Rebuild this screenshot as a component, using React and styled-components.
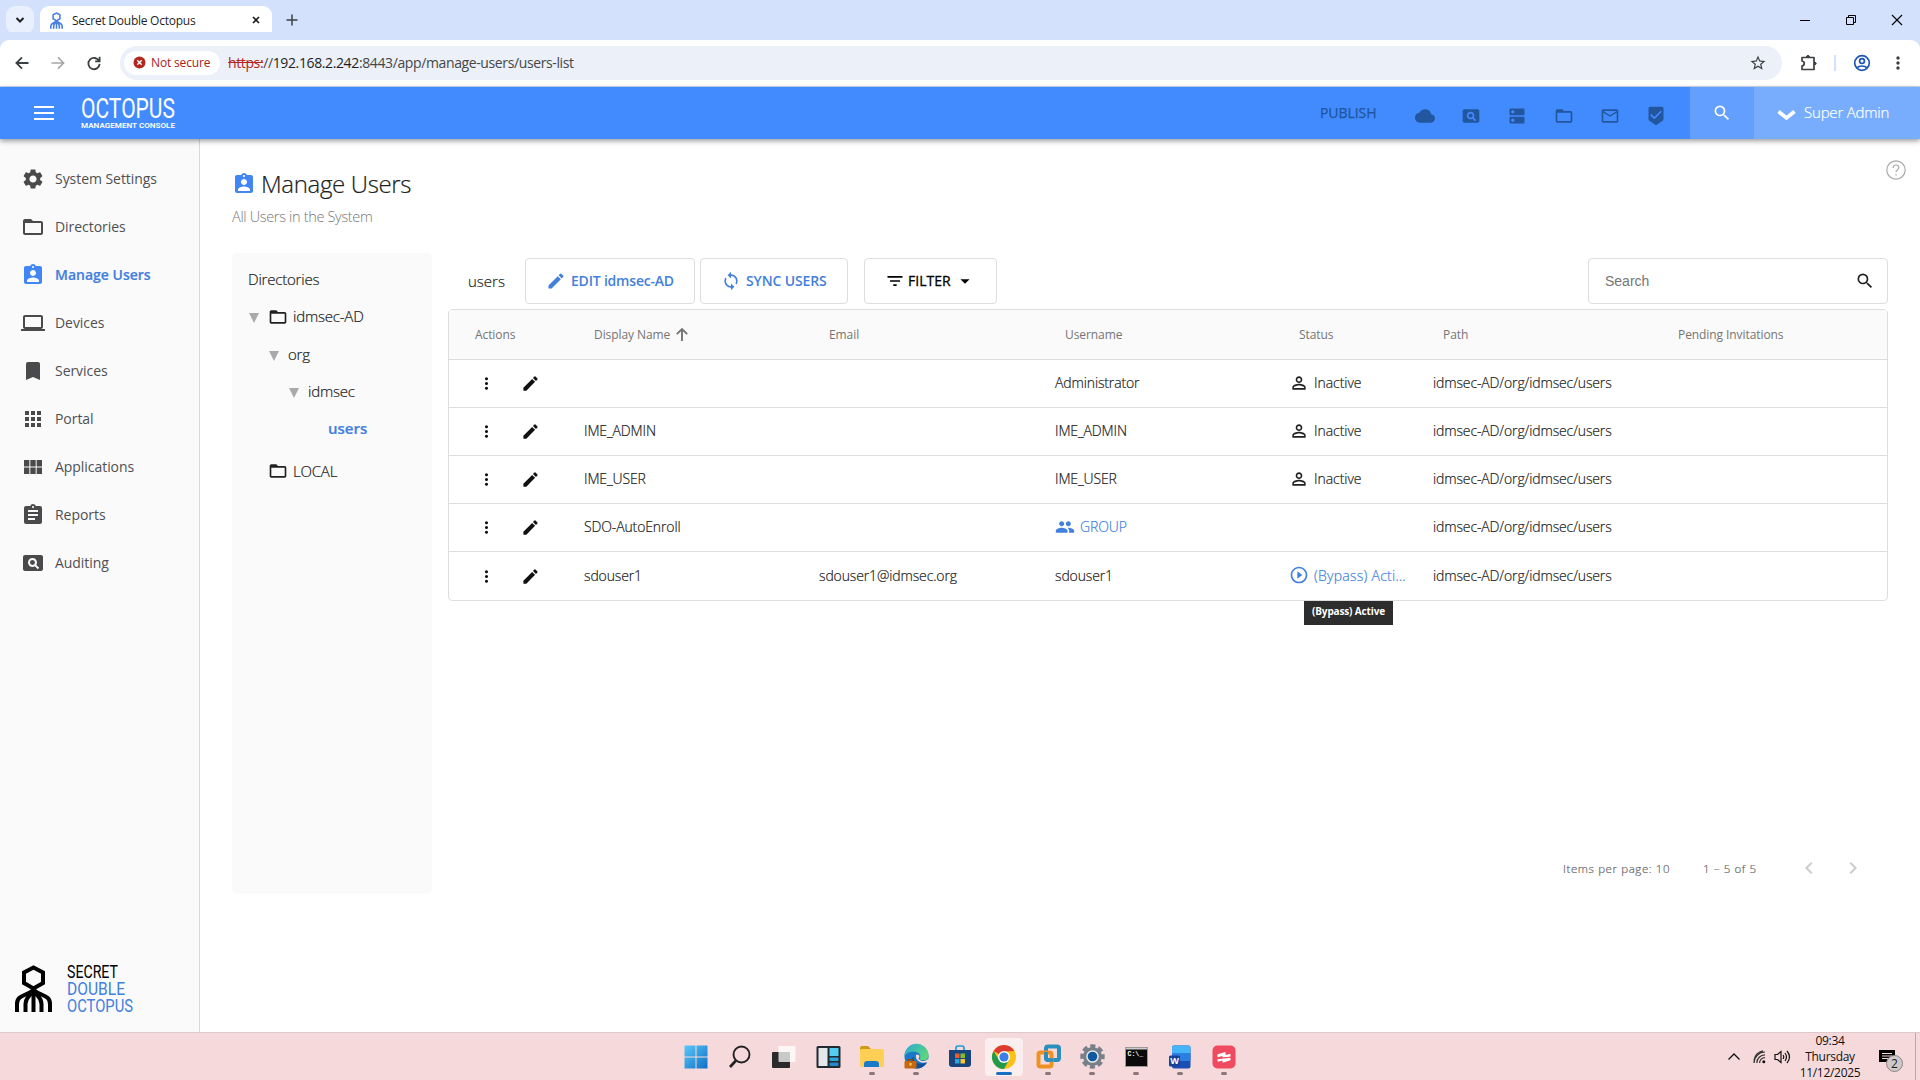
import React, { useState } from 'react';
import styled, { createGlobalStyle, css } from 'styled-components';
import {
  MdSettings, MdFolderOpen, MdAssignmentInd, MdLaptop, MdBookmark, MdApps, MdViewModule,
  MdAssignment, MdPageview, MdCloud, MdDns, MdMailOutline, MdBeenhere, MdSearch, MdEdit,
  MdSync, MdFilterList, MdArrowDropDown, MdMoreVert, MdPersonOutline, MdPeople,
  MdPlayCircleOutline, MdChevronLeft, MdChevronRight, MdStarOutline,
} from 'react-icons/md';

const GlobalStyle = createGlobalStyle`
  * { box-sizing: border-box; }
  body {
    margin: 0;
    overflow: hidden;
    background: #fff;
    font-family: 'Open Sans', 'Noto Sans', sans-serif;
    color: #212121;
  }
  svg { display: block; flex: none; overflow: visible; }
  button, input { font-family: inherit; }
`;

const lightText = css`
  font-weight: 300;
  -webkit-text-stroke: 0.2px currentColor;
`;

const Screen = styled.div`
  width: 1920px;
  height: 1080px;
  display: flex;
  flex-direction: column;
`;

/* ---------- browser ---------- */

const TabStrip = styled.div`
  height: 40px;
  background: #d3e1fc;
  display: flex;
  align-items: flex-start;
  padding: 6px 0 0 6px;
`;

const TabSearch = styled.div`
  width: 28px;
  height: 28px;
  border-radius: 9px;
  background: #e9effd;
  display: flex;
  align-items: center;
  justify-content: center;
`;

const Tab = styled.div`
  width: 232px;
  height: 34px;
  margin-left: 6px;
  padding: 0 10px 6px 9px;
  background: #fff;
  border-radius: 9px 9px 0 0;
  display: flex;
  align-items: center;
  font-size: 12px;
  letter-spacing: -0.25px;
  color: #1f1f1f;
`;

const TabTitle = styled.span`
  margin-left: 8px;
  flex: 1;
`;

const NewTab = styled.div`
  width: 40px;
  height: 28px;
  display: flex;
  align-items: center;
  justify-content: center;
`;

const WindowControls = styled.div`
  margin-left: auto;
  height: 28px;
  display: grid;
  grid-template-columns: repeat(3, 46px);
  align-items: center;
  justify-items: center;
`;

const AddressRow = styled.div`
  height: 47px;
  background: #fff;
  border-bottom: 1px solid #c9d9ee;
  box-shadow: 0 -8px 0 #d3e1fc;
  border-radius: 9px 9px 0 0;
  display: flex;
  align-items: center;
`;

const NavButtons = styled.div`
  width: 120px;
  padding-left: 13px;
  display: grid;
  grid-template-columns: 20px 20px 20px;
  column-gap: 16px;
`;

const AddressBar = styled.div`
  width: 1662px;
  height: 34px;
  border-radius: 17px;
  background: #ebf0f9;
  display: flex;
  align-items: center;
  padding: 0 15px 0 4px;
  margin-bottom: 1px;
`;

const SecureChip = styled.div`
  width: 96px;
  height: 24px;
  border-radius: 12px;
  background: #fff;
  color: #a8201a;
  display: flex;
  align-items: center;
  gap: 5px;
  padding-left: 9px;
  font-size: 12px;
  font-weight: 500;
  letter-spacing: -0.15px;
  white-space: nowrap;
`;

const Url = styled.div`
  margin-left: 8px;
  flex: 1;
  font-size: 14px;
  letter-spacing: -0.38px;
  color: #474747;

  s { color: #b3261e; }
  b { font-weight: 400; color: #1f1f1f; }
`;

const BrowserActions = styled.div`
  flex: 1;
  display: flex;
  align-items: center;
  padding-left: 18px;
  color: #3c4043;
`;

const Divider = styled.span`
  width: 2px;
  height: 16px;
  margin: 0 17px 0 16px;
  background: #d3e1fc;
`;

const BrowserMenu = styled(MdMoreVert)`
  margin-left: 17px;
`;

/* ---------- app header ---------- */

const Header = styled.header`
  height: 52px;
  background: #428bfe;
  display: flex;
  align-items: center;
  position: relative;
  z-index: 2;
  box-shadow: 0 2px 5px rgba(0, 0, 0, 0.4);
  padding-left: 32px;
  color: #fff;
`;

const Brand = styled.div`
  margin-left: 24px;
`;

const Publish = styled.span`
  margin-left: auto;
  padding-bottom: 1px;
  font-size: 14px;
  color: #1f559f;
  -webkit-text-stroke: 0.25px currentColor;
  letter-spacing: -0.05px;
  width: 82px;
`;

const HeaderIcons = styled.div`
  display: grid;
  grid-template-columns: repeat(6, 46.2px);
  justify-items: center;
  padding: 6px 11px 0 0;
  color: #22579f;
`;

const HeaderSearch = styled.div`
  width: 64px;
  height: 52px;
  background: #629fff;
  display: flex;
  align-items: center;
  justify-content: center;
`;

const Account = styled.div`
  width: 166px;
  height: 52px;
  padding: 0 0 2px 23px;
  background: #78adfe;
  display: flex;
  align-items: center;
  gap: 8px;
  font-size: 15px;
  ${lightText}
  letter-spacing: -0.2px;

  svg { margin-top: 5px; }
`;

/* ---------- app body ---------- */

const Body = styled.div`
  flex: 1;
  display: flex;
  min-height: 0;
`;

const Sidebar = styled.nav`
  width: 200px;
  background: #fafafa;
  border-right: 1px solid #d9d9d9;
  padding-top: 16px;
  display: flex;
  flex-direction: column;
`;

const NavItem = styled.a`
  height: 48px;
  padding-left: 21px;
  display: flex;
  align-items: center;
  gap: 10px;
  font-size: 14px;
  letter-spacing: -0.05px;
  color: #4f5054;

  svg { color: #4a4a4d; }

  ${(p) => p.$active && css`
    font-weight: 600;
    color: #427fdf;
    -webkit-text-stroke: 0.2px currentColor;
    letter-spacing: 0;

    svg { color: #4285f4; }
  `}
`;

const NavLabel = styled.span`
  padding-bottom: 2px;
`;

const SideLogo = styled.div`
  margin-top: auto;
  padding: 0 0 18px 14px;
`;

const Main = styled.main`
  flex: 1;
  display: flex;
  flex-direction: column;
  padding: 29px 32px 0 32px;
  position: relative;
`;

const Title = styled.h1`
  margin: 0;
  height: 30px;
  display: flex;
  align-items: center;
  gap: 5px;
  font-size: 24px;
  ${lightText}
  letter-spacing: -0.35px;
  color: #212121;

  svg { color: #4285f4; margin-top: 1px; }
`;

const Subtitle = styled.p`
  margin: 8px 0 0;
  height: 22px;
  line-height: 22px;
  font-size: 14.5px;
  font-weight: 300;
  letter-spacing: -0.33px;
  color: #757575;
`;

const Help = styled.div`
  position: absolute;
  top: 21px;
  right: 14px;
`;

const Columns = styled.div`
  margin-top: 25px;
  display: flex;
  gap: 16px;
`;

const TreePanel = styled.aside`
  width: 200px;
  height: 641px;
  border-radius: 5px;
  background: #fafafa;
  padding: 13px 16px;
  font-size: 15px;
  ${lightText}
  letter-spacing: -0.2px;
  color: #212121;
`;

const TreeHeading = styled.div`
  height: 26px;
  line-height: 26px;
`;

const TreeNode = styled.div`
  display: flex;
  align-items: center;
  height: ${(p) => p.$height}px;
  padding-left: ${(p) => p.$indent}px;

  ${(p) => p.$selected && css`
    font-weight: 600;
    letter-spacing: 0;
    color: #427fdf;
  `}
`;

const Triangle = styled.i`
  width: 0;
  height: 0;
  margin: 4px 9px 0 0;
  border: 5px solid transparent;
  border-top: 10px solid #aaa;
  border-bottom: 0;
`;

const FolderIcon = styled(MdFolderOpen)`
  margin: 1px 5px 0 0;
`;

const Content = styled.section`
  width: 1440px;
`;

const Toolbar = styled.div`
  height: 56px;
  padding: 5px 0;
  display: flex;
`;

const GroupName = styled.div`
  width: 77px;
  padding-left: 20px;
  line-height: 46px;
  font-size: 15px;
  ${lightText}
`;

const Button = styled.button`
  width: ${(p) => p.$width}px;
  height: 46px;
  margin-right: ${(p) => p.$after || 0}px;
  padding: 0 0 0 20px;
  border: 1px solid #ddd;
  border-radius: 4px;
  background: #fff;
  color: ${(p) => (p.$dark ? '#000' : '#437fdc')};
  display: flex;
  align-items: center;
  gap: ${(p) => p.$gap}px;
  font-size: 14px;
  font-weight: ${(p) => (p.$dark ? 500 : 600)};
  letter-spacing: ${(p) => p.$track}px;
`;

const ButtonText = styled.span`
  padding-bottom: 2px;
`;

const FilterText = styled(ButtonText)`
  -webkit-text-stroke: 0.3px currentColor;
`;

const SearchBox = styled.label`
  width: 300px;
  height: 46px;
  margin-left: auto;
  padding: 0 12px 0 16px;
  border: 1px solid #ddd;
  border-radius: 4px;
  display: flex;
  align-items: center;
`;

const SearchInput = styled.input`
  flex: 1;
  min-width: 0;
  padding: 0;
  border: 0;
  outline: 0;
  background: none;
  font: 14px 'Liberation Sans', Arial, sans-serif;

  &::placeholder { color: #757575; }
`;

const Table = styled.div`
  border: 1px solid #ddd;
  border-radius: 4px;
`;

const Row = styled.div`
  display: grid;
  grid-template-columns: 135px 235px 236px 236px 142px 235px 1fr;
  align-items: center;
  height: 48px;
  border-top: 1px solid #ddd;
  font-size: 14px;
  ${lightText}
  letter-spacing: -0.13px;

  &:last-child { height: 49px; }
`;

const HeadRow = styled(Row)`
  height: 49px;
  border-top: 0;
  background: #fafafa;
  font-size: 12px;
  font-weight: 400;
  -webkit-text-stroke: 0;
  letter-spacing: -0.08px;
  color: #757575;
`;

const HeadCell = styled.div`
  display: flex;
  align-items: center;
  gap: 6px;
  padding-left: ${(p) => p.$pad || 10}px;
`;

const Cell = styled.div`
  display: flex;
  align-items: center;
  min-width: 0;
  padding-bottom: 2px;
  color: ${(p) => (p.$link ? '#427fdf' : 'inherit')};
`;

const ActionCell = styled(Cell)`
  padding: 0 0 0 28px;
  gap: 25px;
  color: #111;
`;

const GroupIcon = styled(MdPeople)`
  margin-right: 5px;
`;

const StatusCell = styled(Cell)`
  position: relative;
  gap: 5px;
  margin-left: -2px;
`;

const StatusText = styled.span`
  width: 94px;
  white-space: nowrap;
  letter-spacing: ${(p) => p.$track || 0}px;
`;

const Tooltip = styled.div`
  position: absolute;
  top: 36px;
  left: 15px;
  width: 89px;
  height: 24px;
  line-height: 20px;
  text-align: center;
  background: #2d2d2d;
  color: #fff;
  font-size: 10px;
  font-weight: 700;
  -webkit-text-stroke: 0;
  letter-spacing: -0.15px;
  z-index: 3;
`;

const Pagination = styled.div`
  height: 40px;
  margin-top: 247px;
  display: flex;
  align-items: center;
  justify-content: flex-end;
  padding-right: 23px;
  font-size: 11.5px;
  ${lightText}
  letter-spacing: 0.6px;
  color: #666;
`;

const PageSize = styled.span`
  width: 140px;
`;

const PageRange = styled.span`
  width: 94px;
`;

const PageArrows = styled.div`
  display: flex;
  gap: 20px;
  color: #ccc;
`;

/* ---------- taskbar ---------- */

const Taskbar = styled.footer`
  height: 48px;
  background: #f6dadb;
  border-top: 1px solid #dccaca;
  display: flex;
  padding: 0 4px 0 674px;
`;

const TaskItem = styled.div`
  width: 44px;
  height: 47px;
  display: flex;
  align-items: center;
  justify-content: center;
  position: relative;

  &::after {
    content: '';
    position: absolute;
    bottom: 5px;
    left: 50%;
    width: ${(p) => (p.$active ? 16 : 6)}px;
    height: 3px;
    border-radius: 2px;
    transform: translateX(-50%);
    background: ${(p) => (p.$active ? '#1a6fc0' : '#8b7677')};
    display: ${(p) => (p.$open || p.$active ? 'block' : 'none')};
  }
`;

const TaskHighlight = styled.div`
  width: 38px;
  height: 38px;
  border-radius: 4px;
  background: #fbeeee;
  display: flex;
  align-items: center;
  justify-content: center;
`;

const Tray = styled.div`
  margin-left: auto;
  display: flex;
  align-items: center;
  border-right: 1px solid #b9a6a7;
  padding-right: 10px;
`;

const WifiIcon = styled.svg`
  margin-left: 10px;
`;

const VolumeIcon = styled.svg`
  margin-left: 6px;
`;

const Clock = styled.div`
  width: 66px;
  margin: 0 16px 0 6px;
  text-align: center;
  font-size: 12px;
  line-height: 16px;
  letter-spacing: -0.3px;
  color: #111;
`;

const Notifications = styled.div`
  position: relative;
  width: 26px;
  height: 32px;
  padding-top: 9px;
`;

const Badge = styled.span`
  position: absolute;
  left: 7px;
  top: 14px;
  width: 17px;
  height: 17px;
  border: 1px solid #8d8384;
  border-radius: 50%;
  background: #cfc8c8;
  font-size: 12px;
  line-height: 15px;
  text-align: center;
`;

const navItems = [
  { label: 'System Settings', Icon: MdSettings },
  { label: 'Directories', Icon: MdFolderOpen },
  { label: 'Manage Users', Icon: MdAssignmentInd },
  { label: 'Devices', Icon: MdLaptop },
  { label: 'Services', Icon: MdBookmark },
  { label: 'Portal', Icon: MdApps },
  { label: 'Applications', Icon: MdViewModule },
  { label: 'Reports', Icon: MdAssignment },
  { label: 'Auditing', Icon: MdPageview },
];

const path = 'idmsec-AD/org/idmsec/users';

const users = [
  { name: '', email: '', username: 'Administrator', status: 'Inactive' },
  { name: 'IME_ADMIN', email: '', username: 'IME_ADMIN', status: 'Inactive' },
  { name: 'IME_USER', email: '', username: 'IME_USER', status: 'Inactive' },
  { name: 'SDO-AutoEnroll', email: '', group: true },
  { name: 'sdouser1', email: 'sdouser1@idmsec.org', username: 'sdouser1', status: '(Bypass) Active', bypass: true },
];

// long statuses are cut, the tooltip has the full text
const shorten = (text = '') => (text.length > 14 ? `${text.slice(0, 13)}…` : text);

const Octopus = ({ width, height, color = '#000', stroke = 4 }) => (
  <svg width={width} height={height} viewBox="0 0 38 48" fill="none" stroke={color} strokeWidth={stroke}>
    <path d="M19 3 L28.500 8 V19 L19 25 L9.500 19 V8 Z" />
    <path d="M19 24 V47 M19 26 C11 31 3 31 3 40 V47 M19 26 C15 31 11 33 11 40 V47 M19 26 C27 31 35 31 35 40 V47 M19 26 C23 31 27 33 27 40 V47" />
  </svg>
);

const Line = ({ d, size = 16, width = 1.5, color = '#3c4043' }) => (
  <svg width={size} height={size} viewBox="0 0 16 16" fill="none" stroke={color} strokeWidth={width}>
    <path d={d} />
  </svg>
);

const Browser = () => (
  <>
    <TabStrip>
      <TabSearch><Line d="M4.500 6 L8 9.500 L11.500 6" width={2} color="#1f1f1f" /></TabSearch>
      <Tab>
        <Octopus width={15} height={17} color="#4a80e0" stroke={4.5} />
        <TabTitle>Secret Double Octopus</TabTitle>
        <Line d="M4 4 L12 12 M12 4 L4 12" size={12} width={2.2} color="#1f1f1f" />
      </Tab>
      <NewTab><Line d="M8 2.500 V13.500 M2.500 8 H13.500" /></NewTab>
      <WindowControls>
        <Line d="M3 8.500 H13" width={1} color="#000" />
        <Line d="M3.500 5.500 H10.500 V12.500 H3.500 Z M5.500 5 V3.500 H12.500 V10.500 H11" width={1} color="#000" />
        <Line d="M3 3 L13 13 M13 3 L3 13" width={1.1} color="#000" />
      </WindowControls>
    </TabStrip>
    <AddressRow>
      <NavButtons>
        <Line d="M13.800 8 H3 M8 3 L3 8 L8 13" size={18} width={1.6} />
        <Line d="M2.200 8 H13 M8 3 L13 8 L8 13" size={18} width={1.4} color="#a4a6a9" />
        <Line d="M12.500 6.300 A5 5 0 1 0 13 8.800 M13 2.500 V6.500 H9" size={18} width={1.6} />
      </NavButtons>
      <AddressBar>
        <SecureChip>
          <svg width="13" height="13" viewBox="0 0 13 13">
            <circle cx="6.500" cy="6.500" r="6" fill="#b3261e" />
            <path d="M4.300 4.300 L8.700 8.700 M8.700 4.300 L4.300 8.700" stroke="#fff" strokeWidth="1.4" />
          </svg>
          Not secure
        </SecureChip>
        <Url><s>https:</s>//<b>192.168.2.242</b>:8443/app/manage-users/users-list</Url>
        <MdStarOutline size={18} color="#3c4043" />
      </AddressBar>
      <BrowserActions>
        <svg width="18" height="20" viewBox="0 0 18 20" fill="none" stroke="#3c4043" strokeWidth="1.700">
          <path d="M2 4.500 H14 V16.500 H2 V13 C5 12.500 5 8.500 2 8Z" strokeLinejoin="round" />
          <path d="M6.300 4 Q8 .5 9.700 4Z M14.500 8.800 Q18 10.500 14.500 12.200Z" fill="#3c4043" strokeWidth="1" />
        </svg>
        <Divider />
        <svg width="18" height="18" viewBox="0 0 18 18" fill="none" stroke="#1f57b5" strokeWidth="1.700">
          <circle cx="9" cy="9" r="7.300" />
          <circle cx="9" cy="7" r="2.400" />
          <path d="M3.800 14 C6 11.300 12 11.300 14.200 14" />
        </svg>
        <BrowserMenu size={20} />
      </BrowserActions>
    </AddressRow>
  </>
);

const AppHeader = () => (
  <Header>
    <svg width="24" height="24" viewBox="0 0 24 24" fill="#fff">
      <path d="M2 5 h20 v2 h-20z M2 11 h20 v2 h-20z M2 17 h20 v2 h-20z" />
    </svg>
    <Brand>
      <svg width="96" height="36" viewBox="0 0 96 36" fill="#fff" fontFamily="Roboto, sans-serif">
        <text x="1" y="22.500" fontSize="28" textLength="94" lengthAdjust="spacingAndGlyphs">OCTOPUS</text>
        <text x="1" y="33" fontSize="8" fontWeight="600" textLength="94" lengthAdjust="spacingAndGlyphs">MANAGEMENT CONSOLE</text>
      </svg>
    </Brand>
    <Publish>PUBLISH</Publish>
    <HeaderIcons>
      <MdCloud size={20} />
      <MdPageview size={20} />
      <MdDns size={20} />
      <MdFolderOpen size={20} />
      <MdMailOutline size={20} />
      <MdBeenhere size={20} />
    </HeaderIcons>
    <HeaderSearch><MdSearch size={20} /></HeaderSearch>
    <Account>
      <svg width="19" height="12" viewBox="0 0 19 12" fill="none" stroke="#fff" strokeWidth="3.600">
        <path d="M1.500 2.500 L9.500 9 L17.500 2.500" />
      </svg>
      Super Admin
    </Account>
  </Header>
);

const DirectoryTree = () => (
  <TreePanel>
    <TreeHeading>Directories</TreeHeading>
    <TreeNode $indent={1} $height={48}><Triangle /><FolderIcon size={20} />idmsec-AD</TreeNode>
    <TreeNode $indent={21} $height={28}><Triangle />org</TreeNode>
    <TreeNode $indent={41} $height={45}><Triangle />idmsec</TreeNode>
    <TreeNode $indent={80} $height={29} $selected>users</TreeNode>
    <TreeNode $indent={20} $height={57}><FolderIcon size={20} />LOCAL</TreeNode>
  </TreePanel>
);

const UserRow = ({ user }) => (
  <Row>
    <ActionCell><MdMoreVert size={19} /><MdEdit size={19} /></ActionCell>
    <Cell>{user.name}</Cell>
    <Cell>{user.email}</Cell>
    {user.group
      ? <Cell $link><GroupIcon size={20} />GROUP</Cell>
      : <Cell>{user.username}</Cell>}
    <StatusCell $link={user.bypass}>
      {user.status && (user.bypass ? <MdPlayCircleOutline size={20} /> : <MdPersonOutline size={20} />)}
      <StatusText $track={user.bypass ? 0.25 : -0.05}>{shorten(user.status)}</StatusText>
      {user.bypass && <Tooltip>{user.status}</Tooltip>}
    </StatusCell>
    <Cell>{path}</Cell>
    <Cell />
  </Row>
);

const taskIcons = {
  windows: (
    <svg width="24" height="24" viewBox="0 0 24 24">
      <defs>
        <linearGradient id="win" x1="0" y1="0" x2="1" y2="1">
          <stop offset="0" stopColor="#5cc8f5" /><stop offset="1" stopColor="#0b6fc8" />
        </linearGradient>
      </defs>
      <path fill="url(#win)" d="M.5 .5H11.500V11.500H.5Z M12.500 .5H23.500V11.500H12.500Z M.5 12.500H11.500V23.500H.5Z M12.500 12.500H23.500V23.500H12.500Z" />
    </svg>
  ),
  search: (
    <svg width="24" height="24" viewBox="0 0 24 24" fill="none" stroke="#222" strokeWidth="1.900">
      <circle cx="13.500" cy="9.500" r="8" /><path d="M8 15.500 L2 22" strokeWidth="2.600" />
    </svg>
  ),
  taskView: (
    <svg width="24" height="24" viewBox="0 0 24 24">
      <rect x="0" y="7" width="18" height="16" rx="1" fill="#2a2a2a" />
      <rect x="6.500" y="1" width="17" height="16" rx="1" fill="#fff" opacity=".75" />
    </svg>
  ),
  widgets: (
    <svg width="25" height="24" viewBox="0 0 25 24">
      <rect x=".5" y="1" width="24" height="22" rx="1.500" fill="#222a30" />
      <rect x="2.500" y="3" width="9" height="18" fill="#e4e8ea" />
      <rect x="13.500" y="3" width="9" height="8" fill="#55cdf3" />
      <rect x="13.500" y="12.500" width="9" height="3.500" rx="1" fill="#2ba4dc" />
      <rect x="13.500" y="17.500" width="9" height="3.500" rx="1" fill="#2488cc" />
    </svg>
  ),
  explorer: (
    <svg width="26" height="24" viewBox="0 0 26 24">
      <path d="M1 3 q0-2 2-2 h6 l3 3 v4 H1z" fill="#d29a12" />
      <rect x="1" y="4" width="24" height="18" rx="1.500" fill="#fdd055" />
      <path d="M5 22 v-3 q0-3 3-3 h9 q3 0 3 3 v3z" fill="#1a7ac9" />
    </svg>
  ),
  edge: (
    <svg width="25" height="25" viewBox="0 0 25 25">
      <defs>
        <linearGradient id="edge" x1="0" y1="0" x2="1" y2=".6">
          <stop offset="0" stopColor="#2aa7dd" /><stop offset="1" stopColor="#5bd67a" />
        </linearGradient>
      </defs>
      <circle cx="12.500" cy="12.500" r="12" fill="#1a78c8" />
      <path d="M.5 12 A12 12 0 0 1 24.500 11.500 C24.500 16 20 17 17 16 C14.500 15 17 13.500 16 11 C14 6.500 5 6 .5 12Z" fill="url(#edge)" />
      <path d="M10 12 C8 17 13 22 23 18.500 C20 23 16 25 12 24.500 C7 22 6 16 10 12Z" fill="#124f97" />
      <path d="M12 11 C16 10 16 13 14.500 14.500 C16 17.500 20 18 24 15 V18 C18 20.500 11 17 12 11Z" fill="#f6dadb" />
      <rect x=".5" y="17" width="12" height="7.500" rx="1" fill="#c4670f" />
      <path d="M4.500 17 v-1.500 h4 V17" fill="none" stroke="#8b430a" strokeWidth="1.200" />
      <rect x="5.500" y="19" width="2" height="2.500" fill="#ffd05a" />
    </svg>
  ),
  store: (
    <svg width="24" height="25" viewBox="0 0 24 25">
      <path d="M8 6 V4 q0-2 2-2 h4 q2 0 2 2 V6" fill="none" stroke="#1e9be0" strokeWidth="1.700" />
      <path d="M1 6 H23 V20 q0 3-3 3 H4 q-3 0-3-3z" fill="#17447b" />
      <rect x="7" y="9.500" width="4.500" height="4.500" fill="#f15a30" />
      <rect x="12.500" y="9.500" width="4.500" height="4.500" fill="#83bb32" />
      <rect x="7" y="15" width="4.500" height="4.500" fill="#2fa4e4" />
      <rect x="12.500" y="15" width="4.500" height="4.500" fill="#fcc42c" />
    </svg>
  ),
  chrome: (
    <svg width="24" height="24" viewBox="0 0 24 24">
      <circle cx="12" cy="12" r="12" fill="#fbc116" />
      <path d="M12 12 L1.600 6 A12 12 0 0 1 22.400 6 L12 6.500Z" fill="#de3b30" />
      <path d="M1.600 6 A12 12 0 0 0 12 24 L17 15 L7 15Z" fill="#229a4e" />
      <circle cx="12" cy="12" r="6" fill="#fff" /><circle cx="12" cy="12" r="4.600" fill="#3b7ee8" />
    </svg>
  ),
  vmware: (
    <svg width="25" height="25" viewBox="0 0 25 25" fill="none" strokeWidth="4">
      <rect x="10" y="2.500" width="13" height="13.500" rx="2" stroke="#2b8fbd" />
      <rect x="2.500" y="8.500" width="13" height="14" rx="2" stroke="#ef9124" />
      <path d="M10 8 V14 q0 2 2 2 H17" stroke="#2b8fbd" strokeWidth="3.500" />
    </svg>
  ),
  settings: (
    <svg width="25" height="25" viewBox="0 0 25 25">
      <circle cx="12.500" cy="12.500" r="9.500" fill="#787f87" />
      <circle cx="12.500" cy="12.500" r="10.200" fill="none" stroke="#787f87" strokeWidth="4" strokeDasharray="5 3.010" strokeDashoffset="2.500" />
      <circle cx="12.500" cy="12.500" r="6.300" fill="#e6e9ec" />
      <circle cx="12.500" cy="12.500" r="4.800" fill="#0f5a9e" />
    </svg>
  ),
  terminal: (
    <svg width="23" height="20" viewBox="0 0 23 20">
      <rect x=".5" y=".5" width="22" height="19" fill="#0a0a0a" stroke="#999" />
      <rect x="1" y="1" width="21" height="1.500" fill="#ccc" />
      <text x="2.500" y="9" fontSize="6.500" fontWeight="700" fontFamily="Liberation Mono, monospace" fill="#fff">C:\_</text>
    </svg>
  ),
  word: (
    <svg width="23" height="24" viewBox="0 0 23 24">
      <rect x="3" y=".5" width="18.500" height="23" rx="2" fill="#1c4fb4" />
      <path d="M3 8.500 V2.500 q0-2 2-2 H19.500 q2 0 2 2 V8.500Z" fill="#45b5f7" />
      <path d="M3 8.500 H21.500 V16 H3Z" fill="#2b7fe0" />
      <rect x="0" y="10.500" width="11" height="11" rx="1.500" fill="#174198" />
      <text x="5.500" y="19.300" textAnchor="middle" fontSize="9" fontWeight="700" fontFamily="Open Sans, sans-serif" fill="#fff">W</text>
    </svg>
  ),
  remote: (
    <svg width="24" height="24" viewBox="0 0 24 24">
      <rect x=".5" y=".5" width="23" height="23" rx="5" fill="#f04a60" />
      <path d="M5.500 9.200 L13.500 7 V10 L18.500 8.700 V11.700 L10.500 13.800 V10.900 L5.500 12.200Z" fill="#fff" />
      <path d="M5.500 14.200 L18.500 12.800 V15.300 L10.500 17.700 V15.600 L5.500 16.800Z" fill="#fff" />
      <path d="M5 13.300 L19 12.100" stroke="#f04a60" />
    </svg>
  ),
};

const running = ['explorer', 'edge', 'vmware', 'settings', 'terminal', 'word', 'remote'];

const WindowsTaskbar = () => (
  <Taskbar>
    {Object.keys(taskIcons).map((key) => (
      <TaskItem key={key} $open={running.includes(key)} $active={key === 'chrome'}>
        {key === 'chrome' ? <TaskHighlight>{taskIcons[key]}</TaskHighlight> : taskIcons[key]}
      </TaskItem>
    ))}
    <Tray>
      <Line d="M2.500 10.500 L8 5 L13.500 10.500" width={1.3} color="#111" />
      <WifiIcon width="16" height="16" viewBox="0 0 16 16" fill="none" stroke="#333" strokeWidth="1.200">
        <path d="M2 14 A11 11 0 0 1 13 3 M4.800 14 A8.200 8.200 0 0 1 13 5.800 M7.600 14 A5.400 5.400 0 0 1 13 8.600 M2 11 A11 11 0 0 1 11 1.800" />
        <circle cx="11.800" cy="12.800" r="1.500" fill="#111" stroke="none" />
      </WifiIcon>
      <VolumeIcon width="17" height="16" viewBox="0 0 17 16" fill="none" stroke="#111" strokeWidth="1.200">
        <path d="M1 5.500 H3.500 L7 2.500 V13.500 L3.500 10.500 H1Z M9 6 Q10.500 8 9 10 M11 4 Q14 8 11 12 M13 2 Q18 8 13 14" />
      </VolumeIcon>
      <Clock>09:34<br />Thursday<br />11/12/2025</Clock>
      <Notifications>
        <svg width="16" height="16" viewBox="0 0 16 16">
          <path d="M0 0 H16 V12 H12 L9 15 V12 H0Z" fill="#000" />
          <path d="M3 3.500 H13 M3 6 H13 M3 8.500 H10" stroke="#f6dadb" />
        </svg>
        <Badge>2</Badge>
      </Notifications>
    </Tray>
  </Taskbar>
);

const App = () => {
  const [search, setSearch] = useState('');

  return (
    <Screen>
      <GlobalStyle />
      <Browser />
      <AppHeader />
      <Body>
        <Sidebar>
          {navItems.map(({ label, Icon }) => (
            <NavItem key={label} $active={label === 'Manage Users'}>
              <Icon size={24} />
              <NavLabel>{label}</NavLabel>
            </NavItem>
          ))}
          <SideLogo>
            <svg width="124" height="50" viewBox="0 0 124 50" fontFamily="Roboto, sans-serif" fontSize="17.500">
              <g fill="none" stroke="#000" strokeWidth="4">
                <path d="M19.500 3.500 L29 8.500 V19 L19.500 24.500 L10 19 V8.500 Z" />
                <path d="M19.500 24 V48 M19.500 26 C12 32 3 31 3 40 V48 M19.500 26 C16 32 11.500 33 11.500 40 V48 M19.500 26 C27 32 36 31 36 40 V48 M19.500 26 C23 32 27.500 33 27.500 40 V48" />
              </g>
              <text x="53" y="14" textLength="51" lengthAdjust="spacingAndGlyphs">SECRET</text>
              <text x="53" y="31" fill="#427fdf" textLength="58" lengthAdjust="spacingAndGlyphs">DOUBLE</text>
              <text x="53" y="47.500" fill="#427fdf" textLength="66" lengthAdjust="spacingAndGlyphs">OCTOPUS</text>
            </svg>
          </SideLogo>
        </Sidebar>
        <Main>
          <Title><MdAssignmentInd size={24} />Manage Users</Title>
          <Subtitle>All Users in the System</Subtitle>
          <Help>
            <svg width="20" height="20" viewBox="0 0 20 20" fill="none" stroke="#aaa" strokeWidth="1.200">
              <circle cx="10" cy="10" r="9.200" />
              <path d="M7.200 8 C7.200 4 12.800 4.200 12.800 7.600 C12.800 9.800 10 9.800 10 12.300 M10 14 V15.600" />
            </svg>
          </Help>
          <Columns>
            <DirectoryTree />
            <Content>
              <Toolbar>
                <GroupName>users</GroupName>
                <Button $width={170} $gap={5} $after={5} $track={-0.2}>
                  <MdEdit size={20} /><ButtonText>EDIT idmsec-AD</ButtonText>
                </Button>
                <Button $width={148} $gap={5} $after={16} $track={-0.15}>
                  <MdSync size={20} /><ButtonText>SYNC USERS</ButtonText>
                </Button>
                <Button $width={133} $gap={3} $track={0} $dark>
                  <MdFilterList size={20} /><FilterText>FILTER</FilterText><MdArrowDropDown size={22} />
                </Button>
                <SearchBox>
                  <SearchInput placeholder="Search" value={search} onChange={(e) => setSearch(e.target.value)} />
                  <MdSearch size={20} />
                </SearchBox>
              </Toolbar>
              <Table>
                <HeadRow>
                  <HeadCell $pad={26}>Actions</HeadCell>
                  <HeadCell>
                    Display Name
                    <svg width="12" height="16" viewBox="0 0 12 16" fill="none" stroke="#757575" strokeWidth="1.900">
                      <path d="M6 14 V2 M.8 7.200 L6 2 L11.200 7.200" />
                    </svg>
                  </HeadCell>
                  <HeadCell>Email</HeadCell>
                  <HeadCell>Username</HeadCell>
                  <HeadCell $pad={8}>Status</HeadCell>
                  <HeadCell>Path</HeadCell>
                  <HeadCell>Pending Invitations</HeadCell>
                </HeadRow>
                {users.map((user, i) => <UserRow key={i} user={user} />)}
              </Table>
              <Pagination>
                <PageSize>Items per page: 10</PageSize>
                <PageRange>1 – 5 of 5</PageRange>
                <PageArrows><MdChevronLeft size={24} /><MdChevronRight size={24} /></PageArrows>
              </Pagination>
            </Content>
          </Columns>
        </Main>
      </Body>
      <WindowsTaskbar />
    </Screen>
  );
};

export default App;
